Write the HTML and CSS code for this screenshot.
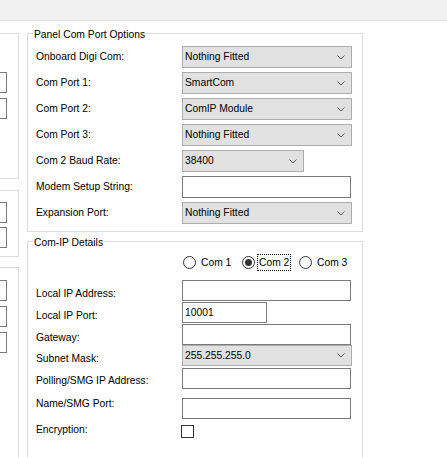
FILE: index.html
```html
<!DOCTYPE html>
<html>
<head>
<meta charset="utf-8">
<title>Com Port Options</title>
<link rel="stylesheet" href="styles.css">
</head>
<body>
<div class="topbar"></div>
<div class="content">
  <div class="left">
    <div class="lgroup la">
      <input class="linput" type="text">
      <input class="linput" type="text">
    </div>
    <div class="lgroup lb">
      <input class="linput" type="text">
      <input class="linput" type="text">
    </div>
    <div class="lgroup lc">
      <input class="linput" type="text">
      <input class="linput" type="text">
      <input class="linput" type="text">
    </div>
  </div>
  <div class="main">
    <div class="group g1">
      <div class="legend">Panel Com Port Options</div>
      <div class="rows1">
        <div class="row"><span class="lbl">Onboard Digi Com:</span><div class="select w170"><span>Nothing Fitted</span><svg width="8" height="5" viewBox="0 0 8 5"><polyline points="0.5,0.5 4,4 7.5,0.5" fill="none" stroke="#5a5a5a" stroke-width="1"/></svg></div></div>
        <div class="row"><span class="lbl">Com Port 1:</span><div class="select w170"><span>SmartCom</span><svg width="8" height="5" viewBox="0 0 8 5"><polyline points="0.5,0.5 4,4 7.5,0.5" fill="none" stroke="#5a5a5a" stroke-width="1"/></svg></div></div>
        <div class="row"><span class="lbl">Com Port 2:</span><div class="select w170"><span>ComIP Module</span><svg width="8" height="5" viewBox="0 0 8 5"><polyline points="0.5,0.5 4,4 7.5,0.5" fill="none" stroke="#5a5a5a" stroke-width="1"/></svg></div></div>
        <div class="row"><span class="lbl">Com Port 3:</span><div class="select w170"><span>Nothing Fitted</span><svg width="8" height="5" viewBox="0 0 8 5"><polyline points="0.5,0.5 4,4 7.5,0.5" fill="none" stroke="#5a5a5a" stroke-width="1"/></svg></div></div>
        <div class="row"><span class="lbl">Com 2 Baud Rate:</span><div class="select w122"><span>38400</span><svg width="8" height="5" viewBox="0 0 8 5"><polyline points="0.5,0.5 4,4 7.5,0.5" fill="none" stroke="#5a5a5a" stroke-width="1"/></svg></div></div>
        <div class="row"><span class="lbl">Modem Setup String:</span><input class="tinput w169" type="text"></div>
        <div class="row"><span class="lbl">Expansion Port:</span><div class="select w170"><span>Nothing Fitted</span><svg width="8" height="5" viewBox="0 0 8 5"><polyline points="0.5,0.5 4,4 7.5,0.5" fill="none" stroke="#5a5a5a" stroke-width="1"/></svg></div></div>
      </div>
    </div>
    <div class="group g2">
      <div class="legend">Com-IP Details</div>
      <div class="radios">
        <div class="radio r1"><svg width="13" height="13" viewBox="0 0 13 13"><circle cx="6.5" cy="6.5" r="6" fill="#fff" stroke="#333" stroke-width="1"/></svg><span class="rtext t1">Com 1</span></div>
        <div class="radio r2"><svg width="13" height="13" viewBox="0 0 13 13"><circle cx="6.5" cy="6.5" r="6" fill="#fff" stroke="#333" stroke-width="1"/><circle cx="6.5" cy="6.5" r="3.5" fill="#333"/></svg><span class="rtext focus">Com 2</span></div>
        <div class="radio r3"><svg width="13" height="13" viewBox="0 0 13 13"><circle cx="6.5" cy="6.5" r="6" fill="#fff" stroke="#333" stroke-width="1"/></svg><span class="rtext t3">Com 3</span></div>
      </div>
      <div class="row h21 m10"><span class="lbl off8">Local IP Address:</span><input class="tinput w169" type="text"></div>
      <div class="row h21 m1"><span class="lbl off8">Local IP Port:</span><input class="tinput w85" type="text" value="10001"></div>
      <div class="row h21 m1"><span class="lbl off8">Gateway:</span><input class="tinput w169" type="text"></div>
      <div class="row h21"><span class="lbl off8">Subnet Mask:</span><div class="select w170"><span>255.255.255.0</span><svg width="8" height="5" viewBox="0 0 8 5"><polyline points="0.5,0.5 4,4 7.5,0.5" fill="none" stroke="#5a5a5a" stroke-width="1"/></svg></div></div>
      <div class="row h21 m2"><span class="lbl off7">Polling/SMG IP Address:</span><input class="tinput w169" type="text"></div>
      <div class="row h21 m9"><span class="lbl">Name/SMG Port:</span><input class="tinput w169" type="text"></div>
      <div class="row h13 m6"><span class="lbl offm1">Encryption:</span><span class="check"></span></div>
    </div>
  </div>
</div>
</body>
</html>
```
FILE: styles.css
```css
html, body {
  margin: 0;
  padding: 0;
  background: #fff;
  overflow: hidden;
}
body {
  width: 447px;
  height: 458px;
  font-family: "Liberation Sans", Arial, sans-serif;
  font-size: 10.3px;
  color: #000;
}
.topbar {
  height: 20px;
  background: #f0f0f0;
  border-bottom: 1px solid #dcdcdc;
}
.content {
  display: flex;
  gap: 8px;
  padding-top: 12px;
}
.left {
  width: 100px;
  margin-left: -81px;
  flex: none;
  display: flex;
  flex-direction: column;
}
.lgroup {
  border: 1px solid #dcdcdc;
  box-sizing: border-box;
  display: flex;
  flex-direction: column;
  align-items: flex-end;
  padding-right: 11px;
}
.la { height: 146px; padding-top: 38px; gap: 5px; }
.lb { height: 67px; margin-top: 11px; padding-top: 11px; gap: 4px; }
.lc { height: 191px; margin-top: 10px; padding-top: 12px; gap: 5px; border-bottom-color: transparent; }
.linput {
  width: 80px;
  height: 21px;
  box-sizing: border-box;
  border: 1px solid #7a7a7a;
  background: #fff;
  margin: 0;
  padding: 0;
  outline: none;
}
.main {
  width: 336px;
  flex: none;
  display: flex;
  flex-direction: column;
  gap: 9px;
}
.group {
  border: 1px solid #dcdcdc;
  box-sizing: border-box;
  padding: 0 9px 0 8px;
}
.g2 { padding-bottom: 19px; border-bottom-color: transparent; }
.legend {
  width: max-content;
  margin: -5px 0 0 -3px;
  padding: 0 1px;
  background: #fff;
  line-height: 12px;
}
.rows1 {
  display: flex;
  flex-direction: column;
  gap: 4px;
  margin-top: 5px;
  padding-bottom: 7px;
}
.row {
  display: flex;
  align-items: center;
  height: 22px;
}
.row.h21 { height: 21px; align-items: flex-start; }
.row.h13 { height: 13px; align-items: flex-start; }
.m1 { margin-top: 1px; }
.m2 { margin-top: 2px; }
.m6 { margin-top: 6px; }
.m9 { margin-top: 9px; }
.m10 { margin-top: 10px; }
.lbl {
  width: 146px;
  flex: none;
  line-height: 12px;
  white-space: nowrap;
}
.off8 { margin-top: 8px; }
.off7 { margin-top: 7px; }
.offm1 { margin-top: -1px; }
.select {
  display: flex;
  align-items: center;
  justify-content: space-between;
  box-sizing: border-box;
  height: 100%;
  border: 1px solid #adadad;
  background: #e1e1e1;
  padding: 0 6px 0 2px;
  line-height: 12px;
}
.select svg { display: block; }
.w170 { width: 170px; }
.w169 { width: 169px; }
.w122 { width: 122px; }
.w85 { width: 85px; }
.tinput {
  box-sizing: border-box;
  height: 100%;
  border: 1px solid #7a7a7a;
  background: #fff;
  margin: 0;
  padding: 0 2px;
  font-family: inherit;
  font-size: inherit;
  color: #000;
  outline: none;
}
.radios {
  display: flex;
  align-items: center;
  height: 16px;
  margin: 5px 0 0 147px;
}
.radio {
  display: flex;
  align-items: center;
  flex: none;
}
.radio svg { display: block; flex: none; }
.r1 { width: 59px; }
.r2 { width: 57px; }
.rtext { line-height: 15px; white-space: nowrap; }
.t1 { margin-left: 5px; }
.t3 { margin-left: 5px; }
.focus {
  margin-left: 2px;
  border: 1px dotted #000;
  padding: 0 1px;
}
.check {
  display: block;
  width: 13px;
  height: 13px;
  box-sizing: border-box;
  border: 1px solid #333;
  background: #fff;
  margin-left: -1px;
}
```
